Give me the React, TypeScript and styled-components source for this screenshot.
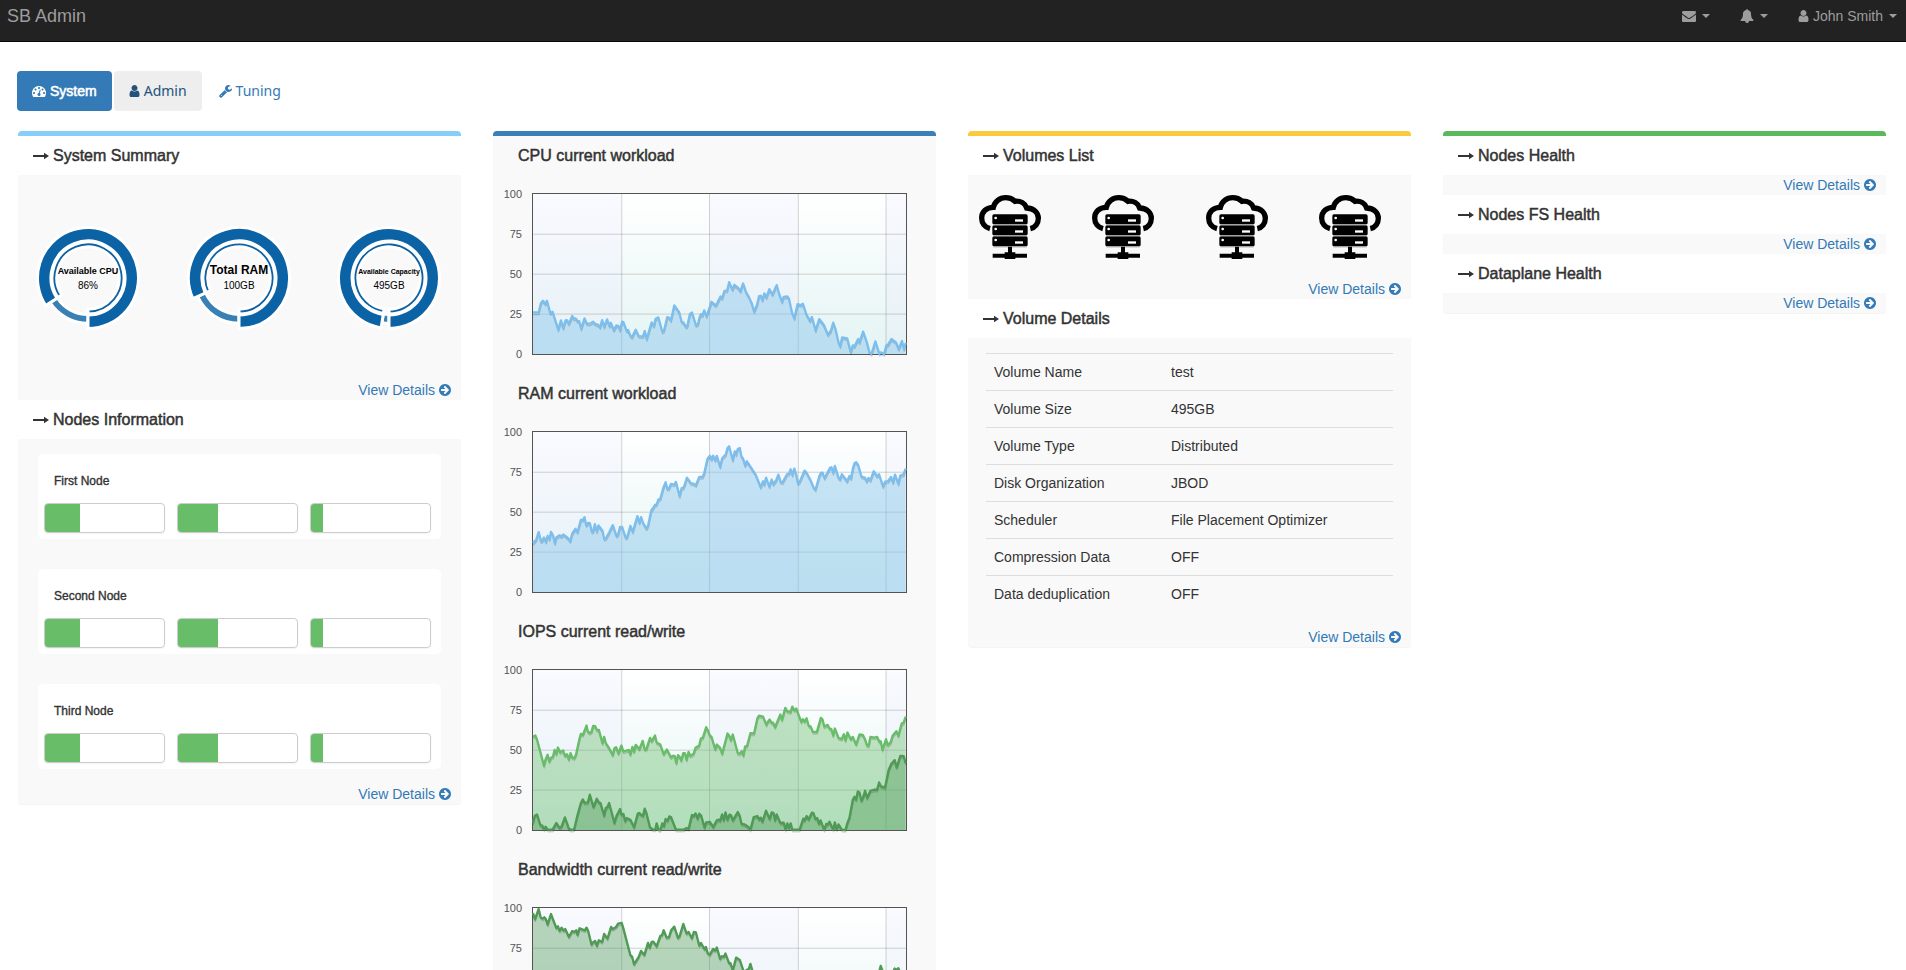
import React from 'react';
import styled, { createGlobalStyle } from 'styled-components';

const GlobalStyle = createGlobalStyle`
  *, *::before, *::after { box-sizing: border-box; }
  html { scrollbar-width: none; }
  body {
    margin: 0;
    background: #fff;
    color: #333;
    font: 14px/20px "Liberation Sans", Arial, sans-serif;
  }
  a { color: #337ab7; text-decoration: none; }
`;

/* ---------- icons ---------- */

const glyphs = {
  envelope: {
    box: '0 0 1792 1792',
    width: 14,
    d: 'M1792 710v794q0 66-47 113t-113 47h-1472q-66 0-113-47t-47-113v-794q44 49 101 87 362 246 497 345 57 42 92.5 65.5t94.5 48 110 24.5h2q51 0 110-24.5t94.5-48 92.5-65.5q170-123 498-345 57-39 100-87zm0-294q0 79-49 151t-122 123q-376 261-468 325-10 7-42.5 31t-54 38.5-52 32.5-57.5 27-50 9h-2q-23 0-50-9t-57.5-27-52-32.5-54-38.5-42.5-31q-91-64-262-182.5t-205-142.5q-62-42-117-115.5t-55-136.5q0-78 41.5-130t118.5-52h1472q65 0 112.5 47t47.5 113z',
  },
  bell: {
    box: '0 0 1792 1792',
    width: 14,
    d: 'M912 1696q0-16-16-16-59 0-101.5-42.5t-42.5-101.5q0-16-16-16t-16 16q0 73 51.5 124.5t124.5 51.5q16 0 16-16zm816-288q0 52-38 90t-90 38h-448q0 106-75 181t-181 75-181-75-75-181h-448q-52 0-90-38t-38-90q50-42 91-88t85-119.5 74.5-158.5 50-206 19.5-260q0-152 117-282.5t307-158.5q-8-19-8-39 0-40 28-68t68-28 68 28 28 68q0 20-8 39 190 28 307 158.5t117 282.5q0 139 19.5 260t50 206 74.5 158.5 85 119.5 91 88z',
  },
  user: {
    box: '192 0 1408 1792',
    width: 11,
    d: 'M1536 1399q0 109-62.5 187t-150.5 78h-854q-88 0-150.5-78t-62.5-187q0-85 8.5-160.5t31.5-152 58.5-131 94-89 134.5-34.5q131 128 313 128t313-128q76 0 134.5 34.5t94 89 58.5 131 31.5 152 8.5 160.5zm-256-887q0 159-112.5 271.5t-271.5 112.5-271.5-112.5-112.5-271.5 112.5-271.5 271.5-112.5 271.5 112.5 112.5 271.5z',
  },
  wrench: {
    box: '64 0 1664 1792',
    width: 13,
    d: 'M448 1472q0-26-19-45t-45-19-45 19-19 45 19 45 45 19 45-19 19-45zm644-420l-682 682q-37 37-90 37-52 0-91-37l-106-108q-38-36-38-90 0-53 38-91l681-681q39 98 114.5 173.5t173.5 114.5zm634-435q0 39-23 106-47 134-164.5 217.5t-258.5 83.5q-185 0-316.5-131.5t-131.5-316.5 131.5-316.5 316.5-131.5q58 0 121.5 16.5t107.5 46.5q16 11 16 28t-16 28l-293 169v224l193 107q5-3 79-48.5t135.5-81 70.5-35.5q15 0 23.5 10t8.5 25z',
  },
  dashboard: {
    box: '0 0 1792 1792',
    width: 14,
    d: 'M384 1152q0-53-37.5-90.5t-90.5-37.5-90.5 37.5-37.5 90.5 37.5 90.5 90.5 37.5 90.5-37.5 37.5-90.5zm192-448q0-53-37.5-90.5t-90.5-37.5-90.5 37.5-37.5 90.5 37.5 90.5 90.5 37.5 90.5-37.5 37.5-90.5zm428 481l101-382q6-26-7.5-48.5t-38.5-29.5-48 6.5-30 39.5l-101 382q-60 5-107 43.5t-63 98.5q-20 77 20 146t117 89 146-20 89-117q16-60-6-117t-72-91zm660-33q0-53-37.5-90.5t-90.5-37.5-90.5 37.5-37.5 90.5 37.5 90.5 90.5 37.5 90.5-37.5 37.5-90.5zm-640-640q0-53-37.5-90.5t-90.5-37.5-90.5 37.5-37.5 90.5 37.5 90.5 90.5 37.5 90.5-37.5 37.5-90.5zm448 192q0-53-37.5-90.5t-90.5-37.5-90.5 37.5-37.5 90.5 37.5 90.5 90.5 37.5 90.5-37.5 37.5-90.5zm320 448q0 261-141 483-19 29-54 29h-1402q-35 0-54-29-141-221-141-483 0-182 71-348t191-286 286-191 348-71 348 71 286 191 191 286 71 348z',
  },
  circleArrow: {
    box: '128 0 1536 1792',
    width: 12,
    d: 'M1413 896q0-27-18-45l-91-91-362-362q-18-18-45-18t-45 18l-91 91q-18 18-18 45t18 45l189 189h-502q-26 0-45 19t-19 45v128q0 26 19 45t45 19h502l-189 189q-19 19-19 45t19 45l91 91q18 18 45 18t45-18l362-362 91-91q18-18 18-45zm251 0q0 209-103 385.5t-279.5 279.5-385.5 103-385.5-103-279.5-279.5-103-385.5 103-385.5 279.5-279.5 385.5-103 385.5 103 279.5 279.5 103 385.5z',
  },
};

type GlyphName = keyof typeof glyphs;

const Glyph = ({ name }: { name: GlyphName }) => {
  const g = glyphs[name];
  return (
    <svg width={g.width} height={14} viewBox={g.box} fill="currentColor" aria-hidden="true">
      <path d={g.d} />
    </svg>
  );
};

const LongArrow = () => (
  <svg width="16" height="8" viewBox="0 0 16 8" fill="currentColor" aria-hidden="true">
    <path d="M0 3H11V0.8L16 4L11 7.2V5H0Z" />
  </svg>
);

const CloudServer = () => (
  <svg width="62" height="64" viewBox="0 0 186 192" role="img" aria-label="Volume">
    <path
      d="M33 101C18 97 8 85 8 69C8 50 23 37 43 37C47 20 62 8 80 8C92 8 101 12 108 19C124 17 138 25 143 39C165 40 178 53 178 70C178 86 168 98 154 101"
      fill="none"
      stroke="#000"
      strokeWidth="16"
    />
    {[58, 91, 124].map((y) => (
      <g key={y}>
        <rect x="40" y={y} width="106" height="30" rx="5" fill="#000" />
        <circle cx="50" cy={y + 11} r="4" fill="#fff" />
        <rect x="108" y={y + 15} width="24" height="7" fill="#fff" />
      </g>
    ))}
    <path d="M43 89.500H143M43 122.500H143M43 155.500H143" stroke="#999" strokeWidth="3" />
    <path d="M87 155H99V172H109V176H144V188H109V192H77V188H41V176H77V172H87Z" fill="#000" />
  </svg>
);

/* ---------- top bar ---------- */

const TopBar = styled.header`
  display: flex;
  justify-content: space-between;
  height: 42px;
  padding: 6px 9px 0 7px;
  background: #222;
  border-bottom: 1px solid #080808;
`;

const Brand = styled.a`
  color: #9d9d9d;
  font-size: 18px;
`;

const UserMenu = styled.nav`
  display: flex;
  align-items: flex-start;
  gap: 30px;
`;

const MenuButton = styled.button`
  display: flex;
  align-items: center;
  gap: 4px;
  height: 20px;
  padding: 0;
  border: 0;
  background: none;
  color: #9d9d9d;
  font: inherit;
  cursor: pointer;
`;

const Caret = styled.span`
  margin-left: 2px;
  border: 4px solid transparent;
  border-top-color: currentColor;
  border-bottom-width: 0;
`;

/* ---------- tabs ---------- */

const Main = styled.main`
  padding: 29px 20px 20px 18px;
`;

const Tabs = styled.nav`
  display: flex;
  gap: 2px;
  margin: 0 0 20px -1px;
`;

type TabState = 'active' | 'hover' | 'idle';

const tabLooks: Record<TabState, string> = {
  active: 'color: #fff; background: #337ab7; -webkit-text-stroke: 0.04em;',
  hover: 'color: #23527c; background: #eee; font-family: "Noto Sans", sans-serif;',
  idle: 'color: #337ab7; font-family: "Noto Sans", sans-serif;',
};

const Tab = styled.a<{ $state: TabState }>`
  display: flex;
  align-items: center;
  gap: 4px;
  height: 40px;
  padding: 0 15px;
  border-radius: 4px;
  ${(p) => tabLooks[p.$state]}
`;

/* ---------- panels ---------- */

const Columns = styled.div`
  display: grid;
  grid-template-columns: repeat(4, minmax(0, 1fr));
  align-items: start;
  gap: 32px;
`;

const Panel = styled.section<{ $accent: string }>`
  border-top: 5px solid ${(p) => p.$accent};
  border-radius: 4px;
  background: #f9f9f9;
  box-shadow: 0 1px 1px rgba(0, 0, 0, 0.05);
`;

const Heading = styled.h2`
  display: flex;
  align-items: center;
  gap: 4px;
  height: 39px;
  margin: 0;
  padding-left: 15px;
  background: #fff;
  font-size: 16px;
  font-weight: 500;
  -webkit-text-stroke: 0.03em;
`;

const DetailsLink = styled.a`
  display: flex;
  justify-content: flex-end;
  align-items: center;
  gap: 4px;
  height: 20px;
  padding-right: 10px;
`;

const Section = ({ title, children }: { title: string; children?: React.ReactNode }) => (
  <>
    <Heading>
      <LongArrow />
      {title}
    </Heading>
    {children}
    <DetailsLink href="#details">
      View Details <Glyph name="circleArrow" />
    </DetailsLink>
  </>
);

/* ---------- system summary ---------- */

const GaugeRow = styled.div`
  display: flex;
  justify-content: space-between;
  padding: 51px 20px 50px 18px;
`;

const polar = (r: number, deg: number) => {
  const a = (deg * Math.PI) / 180;
  return `${(-r * Math.sin(a)).toFixed(2)} ${(r * Math.cos(a)).toFixed(2)}`;
};

/* Ring sector between two angles, measured clockwise from the bottom. */
const sector = (outer: number, inner: number, from: number, to: number) => {
  const large = to - from > 180 ? 1 : 0;
  return `M${polar(outer, from)}A${outer} ${outer} 0 ${large} 1 ${polar(outer, to)}L${polar(inner, to)}A${inner} ${inner} 0 ${large} 0 ${polar(inner, from)}Z`;
};

interface GaugeProps {
  label: string;
  value: string;
  labelSize: number;
  used: number;
}

const Gauge = ({ label, value, labelSize, used }: GaugeProps) => (
  <svg width="104" height="104" viewBox="-52 -52 104 104" textAnchor="middle" role="img" aria-label={`${label} ${value}`}>
    <g stroke="#fff" strokeWidth="3">
      <path d={sector(36, 31.2, used, 360)} fill="#0b62a4" />
      <path d={sector(45.3, 36.5, 0, used)} fill="#3980b5" />
      <path d={sector(50.5, 37, used, 360)} fill="#0b62a4" />
    </g>
    <text y="-4" fontSize={labelSize} fontWeight="bold" fill="#000">
      {label}
    </text>
    <text y="11" fontSize="10" fill="#000">
      {value}
    </text>
  </svg>
);

/* ---------- nodes ---------- */

const NodeList = styled.div`
  display: grid;
  gap: 30px;
  padding: 15px 20px;
`;

const NodeCard = styled.article`
  height: 85px;
  padding: 17px 10px 6px 6px;
  border-radius: 5px;
  background: #fff;
`;

const NodeName = styled.h3`
  margin: 0 0 12px 10px;
  font-size: 12px;
  line-height: 20px;
  font-weight: 500;
  -webkit-text-stroke: 0.03em;
`;

const Meters = styled.div`
  display: grid;
  grid-template-columns: repeat(3, 1fr);
  gap: 12px;
`;

const MeterTrack = styled.div`
  height: 30px;
  border: 1px solid #ccc;
  border-radius: 4px;
  box-shadow: 0 1px 2px rgba(0, 0, 0, 0.05);
  overflow: hidden;
`;

const MeterFill = styled.div`
  height: 100%;
  background: #68bd68;
`;

const nodeNames = ['First Node', 'Second Node', 'Third Node'];
const nodeLoads = [29, 34, 10];

/* ---------- charts ---------- */

const ChartTitle = styled.h2`
  height: 39px;
  margin: 0;
  padding-left: 25px;
  font-size: 16px;
  line-height: 39px;
  font-weight: 500;
  -webkit-text-stroke: 0.03em;
`;

const ChartBody = styled.div`
  display: flex;
  gap: 10px;
  padding: 11px 29px 12px 0;
`;

const Axis = styled.div`
  display: flex;
  flex-direction: column;
  justify-content: space-between;
  width: 29px;
  height: 176px;
  color: #545454;
  font-size: 11px;
  line-height: 16px;
  text-align: right;
`;

const Plot = styled.div`
  flex: 1;
  min-width: 0;
  height: 162px;
  margin: 7px 0;
  border: 1px solid #545454;
`;

const PlotSvg = styled.svg`
  display: block;
  width: 100%;
  height: 100%;
  overflow: visible;
`;

interface Series {
  color: string;
  fill: string;
  samples: string;
}

interface ChartData {
  id: string;
  title: string;
  top: number;
  series: Series[];
}

const LEFT = 128;
const WIDTH = 1122;
const HEIGHT = 481;
const dividers = [0, 266, 530, 797, 1061, WIDTH];

const trace = (samples: string, top: number) =>
  'M' +
  samples
    .trim()
    .split(/\s+/)
    .map((pair) => {
      const [x, y] = pair.split(':').map(Number);
      return `${x - LEFT} ${Math.min(y - top, HEIGHT)}`;
    })
    .join('L');

const Chart = ({ id, title, top, series }: ChartData) => (
  <div>
    <ChartTitle>{title}</ChartTitle>
    <ChartBody>
      <Axis>
        {[100, 75, 50, 25, 0].map((v) => (
          <span key={v}>{v}</span>
        ))}
      </Axis>
      <Plot>
        <PlotSvg viewBox={`0 0 ${WIDTH} ${HEIGHT}`} preserveAspectRatio="none" role="img" aria-label={title}>
          <defs>
            <linearGradient id={id} x2="0" y2="1">
              <stop offset="0" stopColor="#fff" />
              <stop offset="1" stopColor="#e4f4f4" />
            </linearGradient>
          </defs>
          <rect width={WIDTH} height={HEIGHT} fill={`url(#${id})`} />
          {[0, 2, 4].map((i) => (
            <rect key={i} x={dividers[i]} width={dividers[i + 1] - dividers[i]} height={HEIGHT} fill="#e8e8ff" fillOpacity="0.22" />
          ))}
          <g stroke="#545454" strokeOpacity="0.25" strokeWidth="3">
            {dividers.slice(1, 5).map((x) => (
              <path key={x} d={`M${x + 1} 0V${HEIGHT}`} />
            ))}
            {[121, 241, 361].map((y) => (
              <path key={y} d={`M0 ${y}H${WIDTH}`} />
            ))}
          </g>
          {series.map((s) => {
            const line = trace(s.samples, top);
            return (
              <g key={s.color} fill="none" strokeLinejoin="round">
                <path d={`${line}V${HEIGHT}H0Z`} fill={s.fill} />
                <path d={line} transform="translate(1 7)" stroke="#000" strokeOpacity="0.1" strokeWidth="4" />
                <path d={line} transform="translate(1 5)" stroke="#000" strokeOpacity="0.1" strokeWidth="4" />
                <path d={line} stroke={s.color} strokeWidth="7" />
              </g>
            );
          })}
        </PlotSvg>
      </Plot>
    </ChartBody>
  </div>
);

const charts: ChartData[] = [
  {
    id: 'cpu',
    title: 'CPU current workload',
    top: 222,
    series: [
      {
        color: '#7cbfee',
        fill: 'rgba(135, 198, 236, 0.45)',
        samples: `128:578 145:578 152:550 158:543 165:552 170:543 180:580 187:576 197:608 204:630 212:602 219:625 226:602
          230:601 236:612 246:589 250:596 256:596 262:604 267:604 273:627 283:596 290:612 300:611 309:606 316:613
          322:614 330:622 336:601 342:621 351:599 358:619 362:609 371:631 379:617 385:619 390:631 396:606 400:607
          410:634 414:631 421:648 426:652 437:630 446:649 459:650 464:634 470:658 485:608 492:619 497:597 505:593
          517:636 522:633 532:592 538:594 543:602 553:557 560:567 568:578 575:606 580:608 587:620 592:620 600:583
          606:578 618:616 624:614 628:597 633:583 638:587 643:572 650:590 656:573 665:546 677:557 682:550 692:530
          697:535 704:513 712:512 718:487 728:509 734:495 745:504 752:514 760:491 768:515 777:531 786:551 793:575
          802:555 808:529 813:528 818:541 824:521 830:533 839:508 848:524 861:496 868:521 877:546 882:531 893:530
          898:537 907:578 914:596 924:553 934:556 940:552 950:583 961:603 967:592 978:632 989:598 1003:616 1015:645
          1024:633 1031:609 1037:625 1047:668 1052:680 1058:653 1073:656 1084:698 1090:677 1095:680 1106:658
          1110:668 1121:636 1132:667 1140:698 1146:704 1158:665 1170:704 1174:698 1184:704 1191:677 1196:675
          1206:658 1220:668 1228:688 1238:664 1244:688 1249:670`,
      },
    ],
  },
  {
    id: 'ram',
    title: 'RAM current workload',
    top: 186,
    series: [
      {
        color: '#7cbfee',
        fill: 'rgba(135, 198, 236, 0.45)',
        samples: `128:520 138:509 145:487 152:514 155:514 161:503 167:516 172:498 178:508 182:486 188:496 194:520 198:503
          208:496 213:500 219:494 230:502 240:514 246:491 256:477 262:487 272:450 278:450 283:442 288:466 294:459
          299:460 305:486 309:485 314:463 320:485 325:467 337:483 342:507 347:506 357:488 368:466 379:498 384:494
          390:471 396:471 407:504 412:500 421:468 428:486 442:439 448:459 453:442 459:459 469:476 474:468 484:421
          490:414 495:405 500:404 505:389 511:387 520:354 527:337 532:357 537:356 543:342 553:344 558:336 569:379
          575:355 580:354 585:343 591:323 603:340 612:342 618:346 628:321 638:321 643:311 653:266 660:257 665:268
          670:257 676:271 681:258 691:291 697:265 708:253 713:234 718:229 729:271 735:244 739:254 744:237 750:234
          755:260 760:266 766:287 771:274 782:290 798:315 813:352 820:334 824:344 829:323 839:350 846:329 851:343
          860:330 866:314 873:336 879:337 892:313 898:311 903:298 908:315 914:296 920:315 925:340 930:336 945:302
          950:307 962:329 972:353 978:359 989:320 994:309 999:308 1005:325 1021:294 1026:292 1031:309 1036:288
          1047:324 1052:328 1057:313 1073:334 1080:318 1085:326 1090:297 1095:280 1100:277 1106:285 1116:320
          1126:323 1132:334 1137:324 1143:331 1153:304 1163:319 1169:313 1181:350 1187:335 1196:334 1205:321
          1211:338 1217:314 1227:342 1233:317 1243:313 1249:296`,
      },
    ],
  },
  {
    id: 'iops',
    title: 'IOPS current read/write',
    top: 180,
    series: [
      {
        color: '#68bd68',
        fill: 'rgba(104, 189, 104, 0.4)',
        samples: `128:380 135:377 140:389 151:430 161:468 166:448 172:435 177:455 182:444 188:441 193:420 198:433 203:413
          209:427 219:422 224:438 230:433 236:449 241:430 246:443 252:445 257:436 268:386 272:372 278:375 289:347
          293:365 298:369 304:366 309:348 315:349 320:360 326:360 337:400 342:381 347:400 357:415 368:436 373:415
          378:412 385:431 394:407 400:425 416:420 421:434 427:411 432:426 437:405 448:418 458:393 464:419 469:418
          480:384 485:394 495:377 500:398 511:404 521:433 531:419 543:443 548:438 554:438 559:460 564:436 569:441
          574:452 580:430 585:430 590:450 596:426 601:438 611:432 617:414 628:407 633:386 639:383 649:352 654:362
          660:377 665:381 676:418 681:404 687:410 691:414 697:432 713:371 719:379 723:391 729:374 744:430 750:431
          756:424 761:437 766:410 772:408 782:370 793:371 803:325 808:317 820:320 830:345 835:335 840:329 846:339
          850:338 856:352 872:314 877:330 887:294 893:304 903:306 908:290 914:301 920:296 935:336 940:328 945:335
          951:325 957:347 963:350 970:366 982:366 994:324 999:329 1004:350 1014:345 1020:356 1025:357 1031:377
          1036:356 1047:384 1057:387 1063:373 1068:392 1074:368 1084:388 1090:381 1100:404 1110:374 1120:375
          1127:389 1133:407 1138:407 1143:381 1155:383 1163:381 1170:396 1174:394 1179:420 1190:388 1195:406
          1204:397 1210:377 1221:364 1227:378 1237:341 1243:338 1249:320`,
      },
      {
        color: '#4f9a54',
        fill: 'rgba(79, 154, 84, 0.4)',
        samples: `128:640 133:619 140:614 150:646 156:648 161:660 166:651 172:660 187:660 198:640 208:655 214:650 224:623
          236:657 245:661 252:658 262:616 272:580 278:569 283:579 293:578 299:555 310:592 320:567 326:578 331:580
          342:618 347:595 352:592 357:580 373:640 379:619 390:598 394:614 400:613 405:634 410:625 421:630 432:653
          443:612 448:610 453:615 459:618 464:597 469:610 480:653 490:660 496:659 500:641 506:661 511:661 517:641
          522:649 527:628 533:633 538:620 543:622 558:660 580:660 590:655 596:658 606:616 611:619 617:611 623:627
          628:612 634:618 644:654 649:638 660:637 670:652 681:632 687:630 691:633 697:614 702:632 707:608 713:630
          719:615 724:617 729:632 744:607 750:619 755:642 766:645 776:652 782:660 792:622 803:619 808:629 813:624
          818:636 829:603 840:628 846:608 852:611 856:632 861:614 872:640 882:639 888:660 893:641 898:655 903:641
          908:660 930:660 941:627 945:632 951:619 957:629 967:609 972:611 977:627 983:625 988:642 993:632 1004:661
          1010:643 1015:644 1020:636 1031:660 1036:638 1041:659 1047:644 1057:660 1068:661 1073:642 1080:624
          1090:570 1095:561 1100:570 1105:545 1110:548 1116:573 1121:563 1127:543 1133:565 1143:543 1153:540
          1163:540 1169:518 1175:530 1187:533 1198:480 1206:462 1216:451 1222:473 1233:438 1243:439 1249:460`,
      },
    ],
  },
  {
    id: 'bandwidth',
    title: 'Bandwidth current read/write',
    top: 204,
    series: [
      {
        color: '#4f9a54',
        fill: 'rgba(79, 154, 84, 0.4)',
        samples: `128:219 134:238 145:207 151:232 157:236 162:232 167:238 172:254 182:222 198:264 203:259 208:273 214:263
          220:272 225:267 236:291 246:273 252:276 258:271 262:285 268:265 278:269 284:271 289:263 294:273 304:314
          309:307 315:303 320:318 326:301 336:306 342:282 352:296 363:261 368:267 378:261 384:251 395:249 400:266
          421:346 426:350 432:373 446:351 453:333 463:345 474:309 479:324 485:306 490:305 500:319 511:288 516:286
          521:271 530:293 537:292 544:270 553:260 564:294 569:289 580:252 590:281 596:276 606:295 612:276 618:277
          628:317 633:309 644:328 648:321 654:341 660:344 670:327 676:332 681:323 691:357 696:349 702:351 707:341
          718:370 722:370 729:392 739:353 750:360 764:402 771:390 777:388 782:372 793:410 820:440 850:470 900:450
          950:480 1000:500 1050:470 1100:450 1150:420 1163:400 1168:402 1174:378 1185:408 1205:410 1216:386
          1221:390 1227:385 1235:404 1249:410`,
      },
    ],
  },
];

/* ---------- volumes ---------- */

const VolumeIcons = styled.div`
  display: flex;
  justify-content: space-between;
  padding: 20px 30px 20px 11px;
`;

const TableWrap = styled.div`
  padding: 15px 18px 14px;
`;

const Table = styled.table`
  width: 100%;
  border-collapse: collapse;
  table-layout: fixed;

  th, td {
    height: 37px;
    padding: 0 8px;
    border-top: 1px solid #ddd;
    text-align: left;
    font-weight: normal;
  }

  th { width: 177px; }
`;

const volumeFacts = [
  ['Volume Name', 'test'],
  ['Volume Size', '495GB'],
  ['Volume Type', 'Distributed'],
  ['Disk Organization', 'JBOD'],
  ['Scheduler', 'File Placement Optimizer'],
  ['Compression Data', 'OFF'],
  ['Data deduplication', 'OFF'],
];

export default function App() {
  return (
    <>
      <GlobalStyle />
      <TopBar>
        <Brand href="#home">SB Admin</Brand>
        <UserMenu>
          <MenuButton type="button" aria-label="Messages">
            <Glyph name="envelope" />
            <Caret />
          </MenuButton>
          <MenuButton type="button" aria-label="Alerts">
            <Glyph name="bell" />
            <Caret />
          </MenuButton>
          <MenuButton type="button">
            <Glyph name="user" />
            John Smith
            <Caret />
          </MenuButton>
        </UserMenu>
      </TopBar>
      <Main>
        <Tabs>
          <Tab href="#system" $state="active">
            <Glyph name="dashboard" />
            System
          </Tab>
          <Tab href="#admin" $state="hover">
            <Glyph name="user" />
            Admin
          </Tab>
          <Tab href="#tuning" $state="idle">
            <Glyph name="wrench" />
            Tuning
          </Tab>
        </Tabs>
        <Columns>
          <Panel $accent="#87cefa">
            <Section title="System Summary">
              <GaugeRow>
                <Gauge label="Available CPU" value="86%" labelSize={9} used={57} />
                <Gauge label="Total RAM" value="100GB" labelSize={12} used={66} />
                <Gauge label="Available Capacity" value="495GB" labelSize={7} used={9} />
              </GaugeRow>
            </Section>
            <Section title="Nodes Information">
              <NodeList>
                {nodeNames.map((name) => (
                  <NodeCard key={name}>
                    <NodeName>{name}</NodeName>
                    <Meters>
                      {nodeLoads.map((load) => (
                        <MeterTrack key={load}>
                          <MeterFill style={{ width: `${load}%` }} />
                        </MeterTrack>
                      ))}
                    </Meters>
                  </NodeCard>
                ))}
              </NodeList>
            </Section>
          </Panel>
          <Panel $accent="#3a7fb7">
            {charts.map((c) => (
              <Chart key={c.id} {...c} />
            ))}
          </Panel>
          <Panel $accent="#fbc93d">
            <Section title="Volumes List">
              <VolumeIcons>
                {[1, 2, 3, 4].map((n) => (
                  <CloudServer key={n} />
                ))}
              </VolumeIcons>
            </Section>
            <Section title="Volume Details">
              <TableWrap>
                <Table>
                  <tbody>
                    {volumeFacts.map(([name, value]) => (
                      <tr key={name}>
                        <th scope="row">{name}</th>
                        <td>{value}</td>
                      </tr>
                    ))}
                  </tbody>
                </Table>
              </TableWrap>
            </Section>
          </Panel>
          <Panel $accent="#5cb85c">
            <Section title="Nodes Health" />
            <Section title="Nodes FS Health" />
            <Section title="Dataplane Health" />
          </Panel>
        </Columns>
      </Main>
    </>
  );
}
